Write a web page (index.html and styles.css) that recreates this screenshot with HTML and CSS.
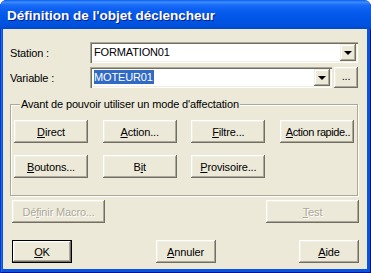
FILE: index.html
```html
<!DOCTYPE html>
<html lang="fr">
<head>
    <meta charset="UTF-8">
    <meta name="viewport" content="width=device-width, initial-scale=1.0">
    <title>Définition de l'objet déclencheur</title>
    <link rel="stylesheet" href="styles.css">
</head>
<body>

    <div class="window">
        <!-- Title bar -->
        <div class="titlebar">
            <span class="title">Définition de l'objet déclencheur</span>
        </div>

        <div class="client">
            <!-- Station / Variable -->
            <div class="field-row">
                <label class="field-label">Station :</label>
                <div class="combo">
                    <span class="combo-text">FORMATION01</span>
                    <span class="drop-btn"><span class="arrow"></span></span>
                </div>
            </div>

            <div class="field-row">
                <label class="field-label">Variable :</label>
                <div class="combo">
                    <span class="combo-text"><span class="selected">MOTEUR01</span></span>
                    <span class="drop-btn"><span class="arrow"></span></span>
                </div>
                <button class="btn btn-browse">...</button>
            </div>

            <!-- Mode group -->
            <fieldset class="group">
                <legend>Avant de pouvoir utiliser un mode d'affectation</legend>
                <div class="mode-grid">
                    <button class="btn"><u>D</u>irect</button>
                    <button class="btn"><u>A</u>ction...</button>
                    <button class="btn"><u>F</u>iltre...</button>
                    <button class="btn btn-tight"><u>A</u>ction rapide..</button>
                    <button class="btn"><u>B</u>outons...</button>
                    <button class="btn">B<u>i</u>t</button>
                    <button class="btn"><u>P</u>rovisoire...</button>
                </div>
            </fieldset>

            <div class="action-row">
                <button class="btn btn-wide" disabled>Dé<u>f</u>inir Macro...</button>
                <button class="btn btn-wide" disabled><u>T</u>est</button>
            </div>

            <div class="footer-row">
                <button class="btn btn-footer btn-default"><u>O</u>K</button>
                <button class="btn btn-footer"><u>A</u>nnuler</button>
                <button class="btn btn-footer"><u>A</u>ide</button>
            </div>
        </div>
    </div>

</body>
</html>
```

FILE: styles.css
```css
/* Global */
body {
    margin: 0;
    padding: 0;
    background: #fff;
    font-family: 'Liberation Sans', Arial, sans-serif;
    font-size: 11px;
    letter-spacing: -0.15px;
    color: #000;
}

/* Window frame */
.window {
    width: 371px;
    height: 273px;
    box-sizing: border-box;
    padding: 0 4px 4px 3px;
    background: #0853e0;
    border-radius: 7px 7px 0 0;
    box-shadow: inset 1px 0 0 #0838c8, inset -1px -1px 0 #00138c, inset 2px 0 0 #1c6af2;
    display: flex;
    flex-direction: column;
    overflow: hidden;
}

.titlebar {
    height: 29px;
    margin: 0 -4px 0 -3px;
    padding-left: 7px;
    display: flex;
    align-items: center;
    border-radius: 7px 7px 0 0;
    background: linear-gradient(to bottom, #0a5af4 0, #3d8ef8 2px, #1a6cf8 5px, #0a5ef0 10px, #0056e6 18px, #0052de 25px, #0049cc 29px);
}

.title {
    color: #fff;
    font-weight: bold;
    font-size: 13.5px;
    letter-spacing: 0;
    text-shadow: 1px 1px 0 #0a1e8a;
    padding-top: 1px;
}

.client {
    flex: 1;
    background: #ece9d8;
    padding: 13px 8px 0 6px;
    display: flex;
    flex-direction: column;
}

/* Fields */
.field-row {
    display: flex;
    align-items: center;
    height: 21px;
    margin-right: 1px;
}

.field-row + .field-row {
    margin-top: 4px;
}

.field-label {
    width: 80px;
    padding-left: 1px;
}

.combo {
    flex: 1;
    height: 21px;
    box-sizing: border-box;
    background: #fff;
    box-shadow: inset 1px 1px 0 #aca899, inset 2px 2px 0 #716f64, inset -1px -1px 0 #fff, inset -2px -2px 0 #f1efe2;
    display: flex;
    align-items: center;
    padding: 2px;
}

.combo-text {
    flex: 1;
    padding-left: 2px;
    line-height: 15px;
}

.selected {
    background: #316ac5;
    color: #fff;
    padding: 1px 1px 1px 0;
}

.drop-btn {
    width: 16px;
    height: 17px;
    box-sizing: border-box;
    background: #ece9d8;
    box-shadow: inset -1px -1px 0 #716f64, inset 1px 1px 0 #f1efe2, inset -2px -2px 0 #aca899, inset 2px 2px 0 #fff;
    display: flex;
    align-items: center;
    justify-content: center;
}

.arrow {
    width: 0;
    height: 0;
    border-left: 4px solid transparent;
    border-right: 4px solid transparent;
    border-top: 4px solid #000;
    margin-top: 1px;
}

/* Buttons */
.btn {
    font-family: 'Liberation Sans', Arial, sans-serif;
    font-size: 11px;
    letter-spacing: -0.15px;
    color: #000;
    background: #ece9d8;
    border: none;
    margin: 0;
    padding: 0;
    height: 23px;
    box-shadow: inset -1px -1px 0 #716f64, inset 1px 1px 0 #fff, inset -2px -2px 0 #aca899, inset 2px 2px 0 #f1efe2;
    white-space: nowrap;
    overflow: hidden;
}

.btn:disabled {
    color: #aca899;
    text-shadow: 1px 1px 0 #fff;
}

.btn-browse {
    width: 24px;
    height: 21px;
    margin-left: 2px;
    padding-bottom: 3px;
}

/* Group box */
.group {
    margin: 10px 1px 0 1px;
    padding: 9px 3px 17px 3px;
    border: 1px solid #aca899;
    box-shadow: 1px 1px 0 #fff, inset 1px 1px 0 #fff;
}

.group legend {
    margin-left: 6px;
    padding: 0 1px;
    line-height: 13px;
    background: #ece9d8;
}

.mode-grid {
    display: grid;
    grid-template-columns: repeat(4, 74px);
    justify-content: space-between;
    row-gap: 12px;
}

.btn-tight {
    letter-spacing: -0.4px;
    padding-left: 2px;
}

.action-row {
    display: flex;
    justify-content: space-between;
    margin-top: 4px;
    padding-left: 3px;
}

.btn-wide {
    width: 93px;
}

.footer-row {
    display: flex;
    justify-content: space-between;
    margin-top: 17px;
    padding-left: 3px;
}

.btn-footer {
    width: 60px;
}

.btn-default {
    box-shadow: inset 0 0 0 1px #000, inset -2px -2px 0 #716f64, inset 2px 2px 0 #fff, inset -3px -3px 0 #aca899, inset 3px 3px 0 #f1efe2;
}
```
